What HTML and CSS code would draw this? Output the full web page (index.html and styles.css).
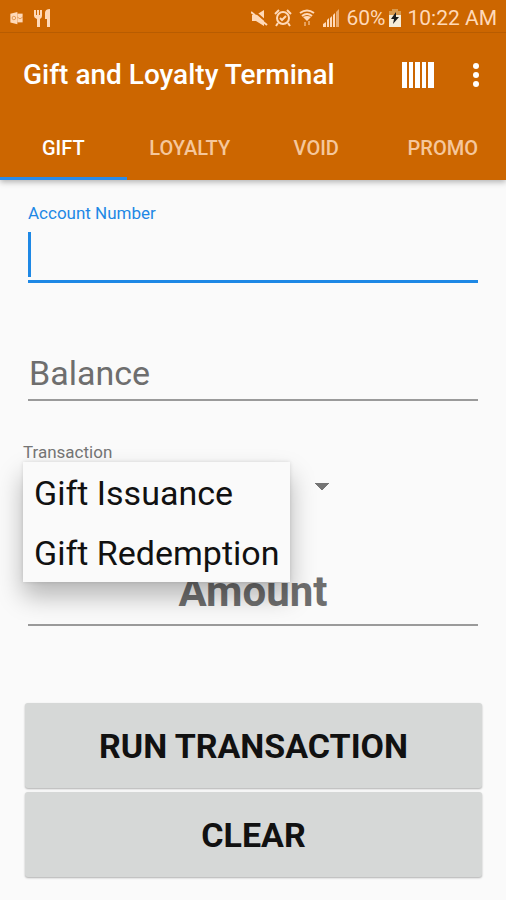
FILE: index.html
```html
<!DOCTYPE html>
<html lang="en">
<head>
    <meta charset="UTF-8">
    <meta name="viewport" content="width=device-width, initial-scale=1.0">
    <title>Gift and Loyalty Terminal</title>
    <link rel="stylesheet" href="styles.css">
</head>
<body>

    <!-- Header -->
    <header class="header">
        <div class="status-bar">
            <div class="status-group">
                <svg width="15" height="14" viewBox="0 0 16 16">
                    <path d="M1 3l8-2v14l-8-2z" fill="currentColor"/>
                    <path d="M9 3h6v10H9z" fill="currentColor"/>
                    <circle cx="5" cy="8" r="2" fill="none" stroke="#cc6600" stroke-opacity=".6"/>
                    <path d="M9 7l3 2 3-2" fill="none" stroke="#cc6600" stroke-opacity=".6"/>
                </svg>
                <svg width="17" height="18" viewBox="0 0 17 18" fill="currentColor">
                    <path d="M0 1h2v5h1V1h2v5h1V1h2v6q0 2-2 3v8H3v-8Q0 9 0 7zM11 10V4q0-4 5-4v18h-3v-8z"/>
                </svg>
            </div>
            <div class="status-group">
                <svg width="17" height="18" viewBox="0 0 17 18">
                    <path d="M1 6h4l8-5v16l-8-5H1z" fill="currentColor"/>
                    <path d="M3 2l14 12" stroke="#cc6600" stroke-width="2"/>
                    <path d="M0 3l16 13" stroke="currentColor" stroke-width="2"/>
                </svg>
                <svg width="18" height="18" viewBox="0 0 18 18" fill="none" stroke="currentColor" stroke-width="2">
                    <circle cx="9" cy="9" r="6"/>
                    <path d="M1 5l4-4M13 1l4 4M4 14l-2 3M14 14l2 3M6 9l2 2 4-4"/>
                </svg>
                <svg width="18" height="18" viewBox="0 0 18 18" fill="none" stroke="currentColor" stroke-width="2">
                    <path d="M2 4q7-5 14 0M4 7q5-4 10 0"/>
                    <path d="M5 8q4-2 8 0l-4 4z" fill="currentColor" stroke="none"/>
                    <path d="M7 13v4M11 12v4" stroke-opacity=".5"/>
                </svg>
                <svg width="18" height="18" viewBox="0 0 18 18" fill="currentColor">
                    <path d="M1 18v-3l3-2v5zM5 18v-7l2-2v9zM8 18V9l2-2v11zM11 18V6l2-2v14z"/>
                    <path d="M14 18V3l3-3v18z" opacity=".6"/>
                </svg>
                <div class="battery">
                    <span>60%</span>
                    <svg width="12" height="18" viewBox="0 0 12 18">
                        <path d="M3 0h6v2h3v16H0V2h3z" fill="#f5ecd8"/>
                        <path d="M3 0h6v2h3v4H0V2h3z" fill="#d99a4e"/>
                        <path d="M7 3L2 10h3l-1 5 6-7H7z" fill="#1c1c1c"/>
                    </svg>
                </div>
                <span>10:22 AM</span>
            </div>
        </div>

        <div class="title-bar">
            <h1>Gift and Loyalty Terminal</h1>
            <button class="icon-btn" aria-label="Scan barcode">
                <svg width="32" height="26" viewBox="0 0 32 26" fill="currentColor">
                    <path d="M0 0h5v26H0zM7 0h4v26H7zM13 0h5v26h-5zM20 0h4v26h-4zM26 0h6v26h-6z"/>
                </svg>
            </button>
            <button class="icon-btn" aria-label="More options">
                <svg width="8" height="24" viewBox="0 0 8 24" fill="currentColor">
                    <circle cx="4" cy="3" r="3"/>
                    <circle cx="4" cy="12" r="3"/>
                    <circle cx="4" cy="21" r="3"/>
                </svg>
            </button>
        </div>

        <nav class="tabs">
            <a href="#gift" class="active">GIFT</a>
            <a href="#loyalty">LOYALTY</a>
            <a href="#void">VOID</a>
            <a href="#promo">PROMO</a>
        </nav>
    </header>

    <!-- Gift Form -->
    <form class="gift-form" id="giftForm">
        <div class="field">
            <label for="account">Account Number</label>
            <input type="text" id="account" class="focused">
        </div>

        <div class="field">
            <input type="text" id="balance" class="balance" placeholder="Balance" aria-label="Balance">
        </div>

        <div class="transaction">
            <label for="transaction">Transaction</label>
            <select id="transaction">
                <option>Gift Issuance</option>
                <option>Gift Redemption</option>
            </select>
            <div class="menu" id="menu">
                <button type="button">Gift Issuance</button>
                <button type="button">Gift Redemption</button>
            </div>
        </div>

        <div class="field">
            <input type="text" id="amount" class="amount" placeholder="Amount" aria-label="Amount">
        </div>

        <div class="actions">
            <button type="submit">RUN TRANSACTION</button>
            <button type="reset">CLEAR</button>
        </div>
    </form>

    <script>
        // Transaction menu
        let menu = document.getElementById("menu");
        let select = document.getElementById("transaction");

        menu.querySelectorAll("button").forEach(function(item) {
            item.addEventListener("click", function() {
                select.value = item.innerText;
                menu.hidden = true;
            });
        });

        select.addEventListener("mousedown", function(event) {
            event.preventDefault();
            menu.hidden = !menu.hidden;
        });

        document.getElementById("giftForm").addEventListener("submit", function(event) {
            event.preventDefault();
        });
    </script>

</body>
</html>
```

FILE: styles.css
```css
/* Global Styles */
* {
    box-sizing: border-box;
}

body {
    font-family: Roboto, sans-serif;
    margin: 0;
    background: #fafafa;
}

button, input, select {
    font-family: inherit;
    margin: 0;
}

svg {
    display: block;
}

/* Header */
.header {
    background: #cc6600;
    color: white;
    box-shadow: 0 2px 6px rgba(0, 0, 0, 0.3);
}

.status-bar {
    display: flex;
    justify-content: space-between;
    align-items: center;
    height: 33px;
    padding: 4px 9px 0;
    border-bottom: 1px solid #b85c00;
    color: #ffd9b8;
    font-size: 21px;
}

.status-group {
    display: flex;
    align-items: center;
    gap: 6px;
}

.status-group:first-child {
    gap: 10px;
}

.battery {
    display: flex;
    align-items: center;
    gap: 4px;
}

.title-bar {
    display: flex;
    align-items: center;
    height: 83px;
    padding: 0 18px 0 23px;
}

.title-bar h1 {
    flex: 1;
    margin: 0;
    font-size: 28px;
    font-weight: 500;
}

.icon-btn {
    background: none;
    border: none;
    padding: 8px;
    color: white;
    cursor: pointer;
}

.icon-btn:last-child {
    margin-left: 22px;
}

.tabs {
    display: grid;
    grid-template-columns: repeat(4, 1fr);
    height: 64px;
}

.tabs a {
    display: flex;
    align-items: center;
    justify-content: center;
    padding-top: 2px;
    border-bottom: 3px solid transparent;
    color: #f5c79c;
    font-size: 20px;
    font-weight: 500;
    text-decoration: none;
}

.tabs a.active {
    color: white;
    border-color: #2a8be8;
}

/* Gift Form */
.gift-form {
    padding: 23px;
}

.field {
    margin: 0 5px;
}

label {
    display: block;
    color: #757575;
    font-size: 17px;
    line-height: 20px;
}

.field label {
    color: #1e88e5;
}

input {
    display: block;
    width: 100%;
    height: 60px;
    padding: 0 1px;
    border: none;
    border-bottom: 2px solid #9a9a9a;
    background: none;
    font-size: 34px;
    outline: none;
}

input::placeholder {
    color: #6e6e6e;
    opacity: 1;
}

/* Focused field with its text cursor */
input.focused {
    padding-left: 6px;
    border-bottom: 3px solid #1e88e5;
    background: linear-gradient(#1e88e5, #1e88e5) 0 9px / 3px 45px no-repeat;
}

input.balance {
    margin-top: 58px;
    padding-top: 6px;
}

.transaction {
    position: relative;
    margin-top: 41px;
}

select {
    display: block;
    width: 316px;
    height: 48px;
    padding: 0 40px 0 11px;
    border: none;
    appearance: none;
    background: conic-gradient(from -45deg at 50% 100%, #757575 90deg, transparent 0) 292px 21px / 14px 7px no-repeat;
    font-size: 34px;
}

.menu {
    position: absolute;
    top: 100%;
    left: 0;
    margin-top: -48px;
    background: #fafafa;
    box-shadow: 0 14px 24px rgba(0, 0, 0, 0.28), 0 0 4px rgba(0, 0, 0, 0.12);
}

.menu button {
    display: block;
    width: 100%;
    height: 60px;
    padding: 2px 11px 0;
    border: none;
    background: none;
    color: #111;
    font-size: 34px;
    text-align: left;
    cursor: pointer;
}

input.amount {
    margin-top: 56px;
    padding-bottom: 8px;
    font-size: 42px;
    font-weight: bold;
    text-align: center;
}

.actions {
    display: grid;
    gap: 4px;
    margin: 77px 1px 0 2px;
}

.actions button {
    height: 85px;
    border: none;
    border-radius: 3px;
    background: #d6d8d7;
    box-shadow: 0 1px 2px rgba(0, 0, 0, 0.3);
    color: #111;
    font-size: 34px;
    font-weight: bold;
    cursor: pointer;
}
```
